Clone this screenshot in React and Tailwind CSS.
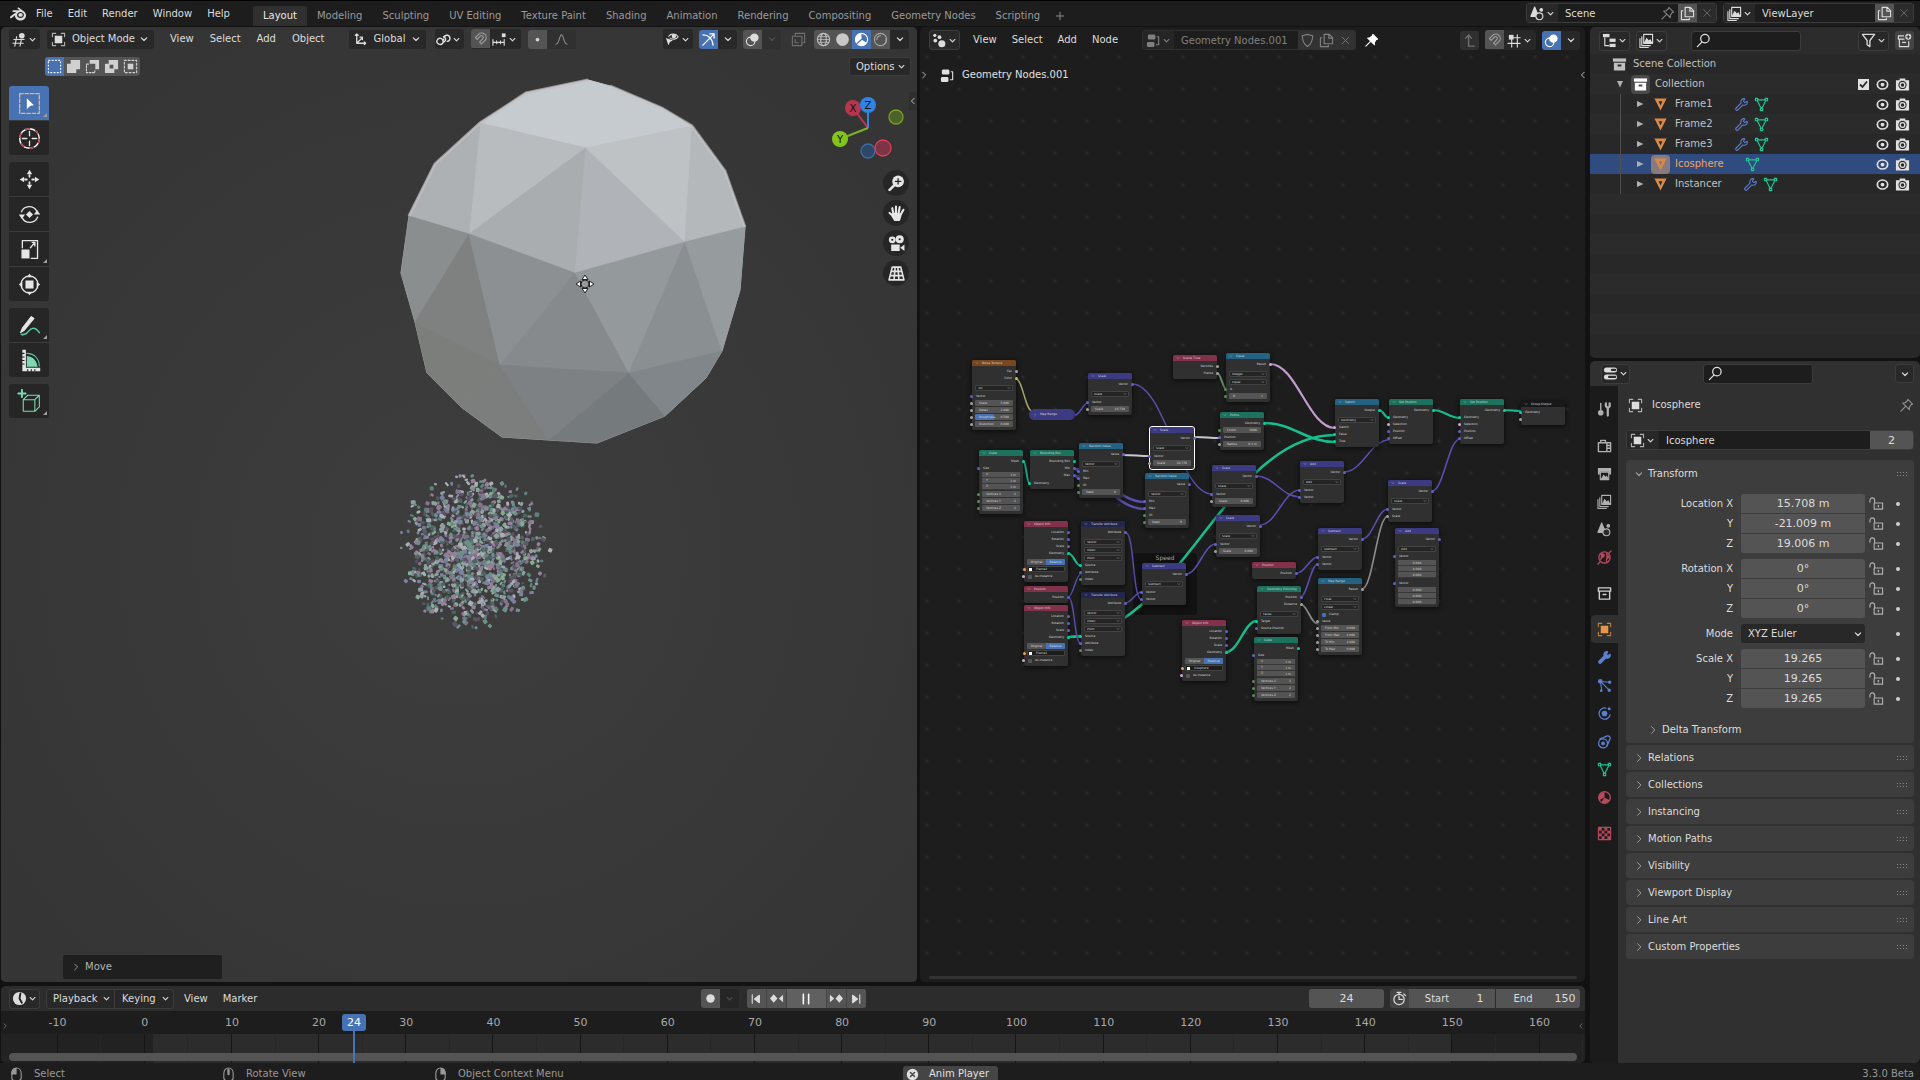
import React from 'react';
import clsx from 'clsx';
import { SiBlender } from 'react-icons/si';

/* ---------- icons ---------- */

const Icon = ({ children, className = 'size-[15px]', box = '0 0 16 16' }) => (
  <svg
    viewBox={box}
    className={clsx('shrink-0', className)}
    fill="none"
    stroke="currentColor"
    strokeWidth="1.2"
    strokeLinecap="round"
    strokeLinejoin="round"
    aria-hidden="true"
  >
    {children}
  </svg>
);

const ICONS = {
  down: <path d="M4.5 6.5 8 10l3.5-3.5" strokeWidth="1.6" />,
  right: <path d="M6 3.5 10.5 8 6 12.5" strokeWidth="1.3" />,
  left: <path d="M10 3.5 5.5 8l4.5 4.5" strokeWidth="1.3" />,
  view3d: (
    <g>
      <path d="M2 8h11M1 12h11M5 5 3 15M10 8 8.5 15" />
      <circle cx="10.5" cy="4" r="3" fill="currentColor" stroke="none" />
    </g>
  ),
  object: (
    <g>
      <path d="M1.5 5V1.5H5M11 1.5h3.5V5M14.5 11v3.5H11M5 14.5H1.5V11" opacity=".75" />
      <rect x="4" y="4" width="8" height="8" fill="currentColor" stroke="none" />
    </g>
  ),
  axes: (
    <g strokeWidth="1.4">
      <path d="M4 2v10h9M4 12l6-6M2.5 3.5 4 2l1.5 1.5M12 10.5l1.5 1.5-1.5 1.5M7.5 5.5H10V8" />
    </g>
  ),
  pivot: (
    <g strokeWidth="1.5">
      <path d="M8.5 5.5a3.3 3.3 0 1 1 3.5 4.500" />
      <path d="M7.500 10.500a3.300 3.300 0 1 0-4.500 2.500 3.300 3.300 0 0 0 4-1l3-3a3.300 3.300 0 0 0-2-4" />
      <circle cx="8" cy="8" r="1" fill="currentColor" stroke="none" />
    </g>
  ),
  magnet: (
    <path d="M2.500 7 6 3.500a4.700 4.700 0 0 1 6.700 6.700L9 13.800l-2-2 3.500-3.600a1.900 1.900 0 0 0-2.700-2.700L4.500 9z" />
  ),
  snapInc: (
    <g>
      <path d="M1 8v6M5 9.500v3M9 9.500v3M13 8v6M1 11h12" />
      <rect x="10.500" y="1.500" width="4" height="4" fill="currentColor" stroke="none" />
    </g>
  ),
  snapGrid: (
    <g>
      <path d="M5 6v9M11 2v13M1 11h13M7 5h7" />
      <rect x="2" y="2" width="5" height="5" fill="currentColor" stroke="none" />
    </g>
  ),
  dot: <circle cx="8" cy="8" r="2" fill="currentColor" stroke="none" />,
  falloff: <path d="M2 13c4 0 3.500-10 6-10s2 10 6 10" />,
  visibility: (
    <g>
      <path d="M4 4.500C6 1.500 12 1.500 14 5 12 8.500 7.500 8 5.500 6.500" />
      <circle cx="9.500" cy="4.500" r="1.700" fill="currentColor" />
      <path d="M1 6.500 8.500 9 5.500 10.500 3.500 14z" fill="currentColor" stroke="none" />
    </g>
  ),
  gizmo: (
    <g strokeWidth="1.400">
      <path d="M2 14 13.500 2.500M9.500 2h4.500v4.500M2 3c6 0 10 4 11 11" />
    </g>
  ),
  overlay: (
    <g>
      <circle cx="10" cy="6" r="4.500" fill="currentColor" stroke="none" />
      <circle cx="6" cy="10" r="4.500" />
    </g>
  ),
  xray: (
    <g>
      <rect x="1.500" y="4.500" width="10" height="10" />
      <path d="M4.500 4V1.500h10v10H12M4.500 8v3.500H8" />
    </g>
  ),
  wire: (
    <g>
      <circle cx="8" cy="8" r="6.500" />
      <ellipse cx="8" cy="8" rx="3" ry="6.500" />
      <path d="M1.500 8h13M2.500 5h11M2.500 11h11" strokeWidth=".8" />
    </g>
  ),
  solid: <circle cx="8" cy="8" r="6.800" fill="currentColor" stroke="none" />,
  material: (
    <g>
      <circle cx="8" cy="8" r="6.500" />
      <path d="M8 1.500V8l5.500 3.500C12 14 9 15 8 14.500 3 14 1.500 11 1.500 8S4 2 8 1.500z" fill="currentColor" stroke="none" />
      <path d="M8 8 3 12.500" stroke="#4772b3" />
    </g>
  ),
  rendered: (
    <g>
      <circle cx="8" cy="8" r="6.500" />
      <path d="M4 8a4 4 0 0 1 4-4M12 13a6 6 0 0 0 2-6" />
    </g>
  ),
  geoNodes: (
    <g fill="currentColor" stroke="none">
      <circle cx="3" cy="2.500" r="1.700" />
      <circle cx="8" cy="4.500" r="2" />
      <circle cx="3.500" cy="8" r="2" />
      <circle cx="10.500" cy="11.500" r="3.800" />
    </g>
  ),
  nodeTree: (
    <g>
      <rect x="2" y="1.500" width="8" height="5.500" rx="1.500" fill="currentColor" stroke="none" />
      <rect x="1" y="9.500" width="8" height="5.500" rx="1.500" fill="currentColor" stroke="none" />
      <path d="M12 4h1.500v8.500H11" />
    </g>
  ),
  shield: <path d="M8 1.500 13.500 3c0 6-1.500 9-5.500 11.500C4 12 2.500 9 2.500 3z" />,
  copy: (
    <g>
      <path d="M5.500 1.500H11l3.500 3.500v6.500h-9zM10.500 1.500v4h4" />
      <path d="M3 5H1.500v9.500h8.500V13" />
    </g>
  ),
  close: <path d="m3.500 3.500 9 9M12.500 3.500l-9 9" />,
  pin: (
    <path d="m9.500 1.500 5 5-1.500.5-2 3v2.500L4 5.500l2.500-.5 2.500-2zM6.500 9.500 2 14" />
  ),
  pinned: (
    <path d="m9.500 1.500 5 5-1.500.5-2 3v2.500L4 5.500l2.500-.5 2.500-2zM6.500 9.500 2 14" fill="currentColor" />
  ),
  parent: <path d="M13 14H7V2M4 5.500 7 2l3 3.500" strokeWidth="1.500" />,
  scene: (
    <g>
      <path d="M5 1 9 11H1z" fill="currentColor" />
      <circle cx="10" cy="11" r="3.700" fill="#2a2a2a" />
      <circle cx="12" cy="4" r="2" fill="currentColor" stroke="none" />
    </g>
  ),
  images: (
    <g>
      <path d="M5 1.500h9.500V11H5zM3 4v9.500h9M1 6v9.500h9" />
      <path d="M5 11l3-6 2.500 3L12 6.500l2.500 4.500z" fill="currentColor" stroke="none" />
    </g>
  ),
  outliner: (
    <g fill="currentColor" stroke="none">
      <rect x="1" y="1" width="7" height="3.500" />
      <rect x="8" y="6" width="6.500" height="3.500" />
      <rect x="8" y="11.500" width="6.500" height="3.500" />
      <path d="M3 5v8.500h4" fill="none" stroke="currentColor" />
    </g>
  ),
  search: (
    <g strokeWidth="1.400">
      <circle cx="9.500" cy="6" r="4.500" />
      <path d="M6.500 9.500 1.500 14.500" />
    </g>
  ),
  filter: <path d="M1.500 1.500h13L9.500 8v6.500l-3-2V8z" strokeWidth="1.400" />,
  newCollection: (
    <g>
      <path d="M1.500 3H7M1.500 3v3.500h6M2.500 6.500v8h10V9M6 10h3" />
      <circle cx="12" cy="4" r="3.200" fill="currentColor" stroke="none" />
      <path d="M12 2.300v3.400M10.300 4h3.400" stroke="#303030" />
    </g>
  ),
  collection: (
    <g fill="currentColor" stroke="none">
      <rect x="1" y="1.500" width="14" height="3.500" />
      <path d="M2 6h12v8.500H2zM6 8v2h4V8z" fillRule="evenodd" />
    </g>
  ),
  collectionLine: (
    <g strokeWidth="1.500">
      <path d="M1.500 2h13v3.500h-13zM2.500 5.500v8.500h11V5.500M6.500 9h3" />
    </g>
  ),
  mesh: <path d="M1.500 1.500h13L8 14.500zM6 4.500 8 9l2-4.500z" fill="currentColor" fillRule="evenodd" stroke="none" />,
  meshData: (
    <g>
      <path d="M4 3h8M3.500 4 7.500 12M12.500 4 8.500 12" />
      <path d="M1.500 1.500h2.500V4H1.500zM12 1.500h2.500V4H12zM6.800 12h2.500v2.500H6.800z" />
    </g>
  ),
  wrench: (
    <path d="M14 4.500 11.500 6 10 4.500 11.500 2C9 1 6.500 3.500 7.500 6.500L2 12c-.8 1 .8 3 2 2l5.500-5.500C12.500 9.500 15 7 14 4.500z" />
  ),
  wrenchFill: (
    <path d="M14 4.500 11.500 6 10 4.500 11.500 2C9 1 6.500 3.500 7.500 6.500L2 12c-.8 1 .8 3 2 2l5.500-5.500C12.500 9.500 15 7 14 4.500z" fill="currentColor" />
  ),
  eye: (
    <g>
      <ellipse cx="8" cy="8" rx="5.500" ry="4.800" strokeWidth="1.800" />
      <circle cx="8" cy="8" r="2" fill="currentColor" stroke="none" />
    </g>
  ),
  camera: (
    <g>
      <path d="M1 3.500h4V1.500h6v2h4v11H1z" fill="currentColor" stroke="none" />
      <circle cx="8" cy="8.500" r="3.800" stroke="#282828" />
      <circle cx="8" cy="8.500" r="1.800" fill="#282828" stroke="none" />
    </g>
  ),
  props: (
    <g>
      <rect x="1" y="1.500" width="14" height="5.500" rx="2.700" fill="currentColor" stroke="none" />
      <rect x="1" y="9" width="14" height="5.500" rx="2.700" fill="currentColor" stroke="none" />
      <path d="M9.500 4.200h3.500M6.500 11.700h6.500" stroke="#2c2c2c" strokeWidth="2.400" />
    </g>
  ),
  tool: (
    <g>
      <path d="M4 1.500V8" strokeWidth="1.500" />
      <circle cx="4" cy="11.500" r="3" fill="currentColor" stroke="none" />
      <path d="M9.500 1.500v3l2 2 2-2v-3M11.500 6.500v8" strokeWidth="2.400" />
    </g>
  ),
  render: (
    <g strokeWidth="1.500">
      <path d="M1.500 5h13v9.500h-13zM4 5V2.500h5V5M10.500 8h4M10.500 11h4M10.500 5v9" />
    </g>
  ),
  output: (
    <g>
      <path d="M1 2h14v7h-2V6H3v3H1z" fill="currentColor" stroke="none" />
      <path d="M3.500 6.500h9v8h-9z" />
      <path d="m4 14 3-5 2 2.500 1.500-1.500 2 4z" fill="currentColor" stroke="none" />
    </g>
  ),
  world: (
    <g strokeWidth="1.400">
      <circle cx="8" cy="8" r="6" />
      <path d="M4 4c3 0 5 1 3 3S4.500 8 4 10M10 3c0 2 2 2.500 3 5-2 0-3 1-3 4" fill="currentColor" />
      <path d="M1 15l2-2M13 3l2-2" />
    </g>
  ),
  particles: (
    <g>
      <circle cx="3.500" cy="3.500" r="2.500" fill="currentColor" stroke="none" />
      <path d="m5 5 7.500 7.500M4 6l1 6.500M6 4l7.500.5" />
      <circle cx="13.500" cy="4.500" r="1.200" fill="currentColor" />
      <circle cx="13" cy="13" r="1.200" fill="currentColor" />
      <circle cx="4.500" cy="13.500" r=".8" fill="currentColor" />
    </g>
  ),
  physics: (
    <g strokeWidth="1.400">
      <path d="M9.500 2.200A6 6 0 1 0 14 9.500" />
      <circle cx="8" cy="8" r="3" fill="currentColor" stroke="none" />
      <circle cx="13" cy="3" r="1.600" fill="currentColor" stroke="none" />
    </g>
  ),
  constraint: (
    <g strokeWidth="1.400">
      <path d="M3 5.500 11 2a2.500 2.500 0 0 1 3 3l-3.500 8" />
      <circle cx="6.500" cy="10" r="4.800" />
      <circle cx="6.500" cy="10" r="2" fill="currentColor" stroke="none" />
    </g>
  ),
  materialTab: (
    <g>
      <circle cx="8" cy="8" r="6.200" strokeWidth="1.400" />
      <path d="M8 2v6l-5.500 3A6.200 6.200 0 0 1 8 2zM8 8l5.500 3a6.200 6.200 0 0 1-9 2z" fill="currentColor" stroke="none" />
    </g>
  ),
  texture: (
    <g>
      <rect x="1.500" y="1.500" width="13" height="13" />
      <path
        d="M2 2h3v3H2zM8 2h3v3H8zM5 5h3v3H5zM11 5h3v3h-3zM2 8h3v3H2zM8 8h3v3H8zM5 11h3v3H5zM11 11h3v3h-3z"
        fill="currentColor"
        stroke="none"
      />
    </g>
  ),
  lock: (
    <g>
      <path d="M1 6.500V4.500a2.500 2.500 0 0 1 5 0v3M5.500 7.500h9V14h-9z" />
      <path d="M10 10v1.500" strokeWidth="1.500" />
    </g>
  ),
  clock: (
    <g>
      <circle cx="8" cy="8" r="7" fill="currentColor" stroke="none" />
      <path d="M9 2.500 8 8l2.500 4.500" stroke="#222" strokeWidth="2" />
    </g>
  ),
  stopwatch: (
    <g strokeWidth="1.300">
      <circle cx="7.500" cy="9" r="5.500" />
      <path d="M5.500 1.500h4M7.500 1.500v2M7.500 5.500V9H11M12.500 3l2 2" />
    </g>
  ),
  record: <circle cx="8" cy="8" r="4.500" fill="currentColor" stroke="none" />,
  jumpStart: <path d="M3 2.500v11M12.500 3 6 8l6.500 5z" fill="currentColor" strokeWidth="1.500" />,
  jumpEnd: <path d="M13 2.500v11M3.500 3 10 8l-6.500 5z" fill="currentColor" strokeWidth="1.500" />,
  prevKey: <path d="M5 3.500 9 8l-4 4.500L1 8zM15 4v8l-4.500-4z" fill="currentColor" stroke="none" />,
  nextKey: <path d="M11 3.500 15 8l-4 4.500L7 8zM1 4v8l4.500-4z" fill="currentColor" stroke="none" />,
  pause: <path d="M5 2.500v11M11 2.500v11" strokeWidth="1.800" />,
  plus: <path d="M8 3v10M3 8h10" />,
  mouseL: (
    <g>
      <path d="M3 7c0-8 10-8 10 0v4.500c0 4.500-10 4.500-10 0z" />
      <path d="M3 7.500c0-3 1-6 4.500-6v6z" fill="currentColor" />
    </g>
  ),
  mouseM: (
    <g>
      <path d="M3 7c0-8 10-8 10 0v4.500c0 4.500-10 4.500-10 0z" />
      <path d="M8 3v4.500" strokeWidth="2.500" />
    </g>
  ),
  mouseR: (
    <g>
      <path d="M3 7c0-8 10-8 10 0v4.500c0 4.500-10 4.500-10 0z" />
      <path d="M13 7.500c0-3-1-6-4.500-6v6z" fill="currentColor" />
    </g>
  ),
  cancel: (
    <g>
      <circle cx="8" cy="8" r="7" fill="currentColor" stroke="none" />
      <path d="m5.500 5.500 5 5M10.500 5.500l-5 5" stroke="#454545" strokeWidth="1.800" />
    </g>
  ),
  // selection modes
  selSet: <rect x="1.500" y="1.500" width="13" height="13" strokeDasharray="2 1.500" strokeLinecap="butt" />,
  selExtend: <path d="M5 1h10v10h-4v4H1V5h4z" fill="currentColor" stroke="none" />,
  selSub: (
    <g>
      <path d="M5 1h10v10h-4V5H5z" fill="currentColor" stroke="none" />
      <path d="M3.500 5.500h-2v9h9v-2" strokeDasharray="2 1.500" />
    </g>
  ),
  selInvert: <path d="M5 1h10v10h-4v4H1V5h4zM6 6v4h4V6z" fill="currentColor" fillRule="evenodd" stroke="none" />,
  selInter: (
    <g>
      <rect x="1.500" y="1.500" width="13" height="13" strokeDasharray="2 2" />
      <rect x="5" y="5" width="6" height="6" fill="currentColor" stroke="none" />
    </g>
  ),
};

const Glyph = ({ name, className }) => <Icon className={className}>{ICONS[name]}</Icon>;

const TOOL_ICONS = {
  select: (
    <g>
      <rect x="3" y="3" width="22" height="22" stroke="#f0b070" strokeDasharray="4 2" strokeWidth="1.500" />
      <path d="m11 8 8 8-4 .5-4 4z" fill="#fff" stroke="none" />
    </g>
  ),
  cursor: (
    <g>
      <circle cx="14" cy="14" r="11" strokeWidth="1.600" stroke="#fff" />
      <circle cx="14" cy="14" r="11" strokeWidth="1.600" stroke="#b43c50" strokeDasharray="5.800 5.800" strokeLinecap="butt" />
      <path d="M14 6v5M14 17v5M6 14h5M17 14h5" strokeWidth="1.500" />
    </g>
  ),
  move: (
    <g strokeWidth="2">
      <path d="M14 9v2M14 17v2M9 14h2M17 14h2" />
      <path d="m14 3-3 5h6zM14 25l-3-5h6zM3 14l5-3v6zM25 14l-5-3v6z" fill="currentColor" stroke="none" />
    </g>
  ),
  rotate: (
    <g strokeWidth="1.500">
      <path d="M5 11a9.500 9.500 0 0 1 17-1M23 17a9.500 9.500 0 0 1-17 1" />
      <path d="m2 14 7 0-3.500 5zM19 14l7 0-3.500-5zM14 10l4 4-4 4-4-4z" fill="currentColor" stroke="none" />
    </g>
  ),
  scale: (
    <g strokeWidth="1.500">
      <path d="M6 12V4h17v20h-7" />
      <rect x="5" y="14" width="9" height="10" fill="currentColor" stroke="none" />
      <path d="m15 12 5-6M17 6h3v4" />
    </g>
  ),
  transform: (
    <g strokeWidth="1.500">
      <circle cx="14" cy="14" r="9.500" />
      <rect x="9.500" y="9.500" width="9" height="9" fill="currentColor" stroke="none" />
      <path d="m14 2-3 4h6zM14 26l-3-4h6zM2 14l4-3v6zM26 14l-4-3v6z" fill="currentColor" stroke="none" />
    </g>
  ),
  annotate: (
    <g>
      <path d="M16 4 6 17l-2 5 4.500-3L19 6z" fill="currentColor" />
      <path d="M5 24c8 2 7-7 13-7 4 0 5 2 7 5" stroke="#58c8a0" strokeWidth="1.800" />
    </g>
  ),
  measure: (
    <g>
      <path d="M11 21V9c8 1 11 6 12 12z" fill="#7fd9b0" stroke="none" />
      <path d="M11 6c9 0 14 7 14 14" stroke="#58c8a0" />
      <path d="M6 2h4v20h16v4H6z" fill="currentColor" stroke="none" />
      <path d="M6 6h2M6 10h2M6 14h2M6 18h2M12 26v-2M16 26v-2M20 26v-2" stroke="#222" />
    </g>
  ),
  addCube: (
    <g stroke="#7fd9b0">
      <path d="M7 12h13v13H7zM7 12l5-5h13v13l-5 5M20 12l5-5" />
      <path d="M5.500 1v8M1.500 5h8" strokeWidth="2.200" />
    </g>
  ),
};

/* ---------- shared controls ---------- */

const MenuButton = ({ children, className }) => (
  <button type="button" className={clsx('whitespace-nowrap', className)}>
    {children}
  </button>
);

// small icon button with a chevron, used by all the editor headers
const IconMenu = ({ icon, label, className }) => (
  <button
    type="button"
    aria-label={label}
    className={clsx('flex h-[20px] items-center justify-center rounded-[3px] border border-[#3c3c3c] bg-[#282828]', className)}
  >
    <Glyph name={icon} />
    <Glyph name="down" className="size-[11px]" />
  </button>
);

const IconButton = ({ icon, label, active, className, iconClass }) => (
  <button
    type="button"
    aria-label={label}
    className={clsx('flex h-[19px] w-[19px] items-center justify-center', active ? 'bg-[#4772b3] text-white' : className)}
  >
    <Glyph name={icon} className={iconClass} />
  </button>
);

const Dropdown = ({ icon, value, label, className }) => (
  <div className={clsx('flex h-[19px] items-center rounded-[3px] bg-[#282828] px-1', className)}>
    {icon && <Glyph name={icon} />}
    <select aria-label={label} className="min-w-0 flex-1 appearance-none bg-transparent pl-[6px] outline-none" defaultValue={value}>
      <option>{value}</option>
    </select>
    <Glyph name="down" className="size-[12px]" />
  </div>
);

/* ---------- top bar ---------- */

const WORKSPACES = [
  'Layout',
  'Modeling',
  'Sculpting',
  'UV Editing',
  'Texture Paint',
  'Shading',
  'Animation',
  'Rendering',
  'Compositing',
  'Geometry Nodes',
  'Scripting',
];

const DataBlock = ({ icon, name, pin }) => (
  <div className="flex h-[20px] w-[191px] items-stretch rounded-[3px] border border-[#3c3c3c] bg-[#1d1d1d]">
    <button type="button" aria-label={`Browse ${name}`} className="flex w-[31px] items-center justify-center bg-[#282828]">
      <Glyph name={icon} />
      <Glyph name="down" className="size-[11px]" />
    </button>
    <input aria-label={name} defaultValue={name} className="min-w-0 flex-1 bg-transparent pl-[7px] outline-none" />
    {pin && (
      <button type="button" aria-label="Pin" className="flex w-[22px] items-center justify-center text-[#808080]">
        <Glyph name="pin" />
      </button>
    )}
    <button type="button" aria-label="New" className="flex w-[19px] items-center justify-center bg-[#545454]">
      <Glyph name="copy" />
    </button>
    <button type="button" aria-label="Remove" className="flex w-[19px] items-center justify-center bg-[#2b2b2b] text-[#6a6a6a]">
      <Glyph name="close" className="size-[12px]" />
    </button>
  </div>
);

const TopBar = () => (
  <header className="flex h-[26px] shrink-0 items-start border-t border-black bg-[#1d1d1d]">
    <nav className="flex h-[25px] items-center gap-[15px] pl-[10px]">
      <SiBlender className="size-[16px] -mr-[5px]" />
      {['File', 'Edit', 'Render', 'Window', 'Help'].map((m) => (
        <MenuButton key={m}>{m}</MenuButton>
      ))}
    </nav>
    <nav className="ml-[23px] mt-[5px] flex h-[20px] items-stretch">
      {WORKSPACES.map((w, i) => (
        <button
          key={w}
          type="button"
          className={clsx('whitespace-nowrap rounded-t-[3px] px-[10px]', i === 0 ? 'bg-[#303030] text-[#e6e6e6]' : 'text-[#9a9a9a]')}
        >
          {w}
        </button>
      ))}
      <button type="button" aria-label="Add workspace" className="flex w-[20px] items-center justify-center text-[#9a9a9a]">
        <Glyph name="plus" className="size-[12px]" />
      </button>
    </nav>
    <div className="ml-auto mt-[2px] flex gap-[6px] pr-[6px]">
      <DataBlock icon="scene" name="Scene" pin />
      <DataBlock icon="images" name="ViewLayer" />
    </div>
  </header>
);

/* ---------- 3D viewport ---------- */

const OUTLINE =
  '588,80 526,93 480,123 435,164 409,216 401,273 415,322 427,373 461,407 502,437 549,440 597,443 665,416 706,378 722,351 740,290 745,227 725,171 692,126 662,108 610,86';

const FACES = [
  ['480,123 526,93 588,80 610,86 662,108 692,126 586,148', '#c6cbcf'],
  ['480,123 586,148 469,234', '#b8bcbf'],
  ['480,123 469,234 409,216 435,164', '#adb1b4'],
  ['586,148 469,234 575,273', '#a9adb0'],
  ['586,148 575,273 685,242', '#b0b4b8'],
  ['586,148 692,126 685,242', '#bec2c5'],
  ['692,126 725,171 745,227 685,242', '#b4b8bb'],
  ['409,216 469,234 415,322 401,273', '#8b8e8e'],
  ['469,234 415,322 500,365', '#7e8180'],
  ['469,234 575,273 500,365', '#8c9092'],
  ['575,273 500,365 629,373', '#868a8d'],
  ['575,273 685,242 629,373', '#94999c'],
  ['685,242 629,373 722,351', '#8a8f92'],
  ['685,242 745,227 740,290 722,351', '#969b9e'],
  ['415,322 500,365 461,407 427,373', '#7b7e7b'],
  ['500,365 461,407 502,437 549,440', '#7b7e7d'],
  ['500,365 629,373 549,440', '#7d8183'],
  ['629,373 549,440 597,443 665,416', '#757a7c'],
  ['629,373 665,416 706,378 722,351', '#81868a'],
];

const CONFETTI = ['#8fa0a2', '#6d918a', '#86748f', '#98809a', '#5f807d', '#7a82a0', '#86ab92', '#565f60', '#5f5266', '#a9aeb3', '#4d6663'];

const makeParticles = (count) => {
  let seed = 24;
  const rnd = () => {
    seed = (seed * 1664525 + 1013904223) % 4294967296;
    return seed / 4294967296;
  };
  return Array.from({ length: count }, () => {
    const a = rnd() * Math.PI * 2;
    const r = 82 * Math.pow(rnd(), 0.7) * (0.7 + rnd() * 0.3);
    return {
      x: 473 + Math.cos(a) * r * 0.94,
      y: 549 + Math.sin(a) * r,
      w: 2 + rnd() * 3,
      h: 2 + rnd() * 3,
      turn: rnd() * 90,
      fill: CONFETTI[Math.floor(rnd() * CONFETTI.length)],
    };
  });
};

const PARTICLES = makeParticles(1350);

const SceneDrawing = () => (
  <svg viewBox="1 27 916 955" preserveAspectRatio="xMidYMid slice" className="absolute inset-0 h-full w-full">
    <defs>
      <radialGradient id="backdrop" cx="50%" cy="55%" r="60%">
        <stop offset="0" stopColor="#3e3e3e" />
        <stop offset="1" stopColor="#353535" />
      </radialGradient>
    </defs>
    <rect x="1" y="27" width="916" height="955" fill="url(#backdrop)" />
    <polygon points={OUTLINE} fill="#a8a9aa" stroke="#a8a9aa" strokeWidth="1" />
    {FACES.map(([points, fill]) => (
      <polygon key={points} points={points} fill={fill} stroke={fill} strokeWidth=".6" />
    ))}
    <polyline points="409,216 435,164 480,123 526,93 588,80" fill="none" stroke="#c4c0c4" strokeWidth="3" opacity=".7" />
    <polyline points="610,86 662,108 692,126 725,171 745,227" fill="none" stroke="#c4c4c6" strokeWidth="3" opacity=".6" />
    {PARTICLES.map((p, i) => (
      <rect key={i} x={p.x} y={p.y} width={p.w} height={p.h} rx="1" fill={p.fill} transform={`rotate(${p.turn} ${p.x} ${p.y})`} />
    ))}
    <g transform="translate(585 284)" fill="#fff" stroke="#222" strokeWidth="1">
      <circle r="4" fill="none" />
      <path d="M0-9 3-4.500h-6zM0 9 3 4.500h-6zM-9 0l4.500-3v6zM9 0 4.500-3v6z" />
    </g>
  </svg>
);

const AxisGizmo = () => (
  <svg viewBox="825 92 84 70" className="h-[70px] w-[84px]">
    <circle cx="868" cy="151" r="7" fill="#2f4766" stroke="#3b6ca6" strokeWidth="1.300" />
    <circle cx="896" cy="117" r="7" fill="#4d622a" stroke="#76a120" strokeWidth="1.300" />
    <circle cx="883" cy="148" r="8" fill="#7a3546" stroke="#e83a58" strokeWidth="1.300" />
    <path d="M868 128 853 108" stroke="#b83a50" strokeWidth="2" />
    <circle cx="853" cy="108" r="8" fill="#b5364e" />
    <path d="M868 128v-23" stroke="#2f83e3" strokeWidth="2" />
    <path d="m868 128-28 11" stroke="#7db320" strokeWidth="2" />
    <circle cx="868" cy="105" r="8" fill="#2f83e3" />
    <circle cx="840" cy="139" r="8" fill="#85c41c" />
    <g fontSize="10" textAnchor="middle" fill="#111">
      <text x="853" y="112">X</text>
      <text x="868" y="109">Z</text>
      <text x="840" y="143">Y</text>
    </g>
  </svg>
);

const NAV_ICONS = [
  [
    'Zoom',
    <g>
      <circle cx="9.500" cy="6" r="5.500" fill="currentColor" stroke="none" />
      <path d="M6 9.500 1.500 14" strokeWidth="2.500" />
      <path d="M9.500 3.500v5M7 6h5" stroke="#222" />
    </g>,
  ],
  [
    'Pan',
    <path
      d="M4.500 10 1.500 7.500M5 8 4 3M7.500 7V1.500M10 7.500 11 2M12 9l2.500-4.500M5 8l7 1-1.500 5h-4L4 10z"
      fill="currentColor"
      strokeWidth="2"
    />,
  ],
  [
    'Camera view',
    <g fill="currentColor" stroke="none">
      <circle cx="4" cy="4.500" r="3.200" />
      <circle cx="11" cy="4" r="3.800" />
      <path d="M3 9h8v6H3zM11.500 12 15.500 9v6z" />
      <circle cx="4" cy="4.500" r="1" fill="#222" />
      <circle cx="11" cy="4" r="1" fill="#222" />
    </g>,
  ],
  ['Orthographic', <path d="M4 2h8l3 12H1zM3 6h10M2 10h12M6.700 2 5.700 14M9.300 2l1 12" strokeWidth="1.500" />],
];

const TOOL_GROUPS = [['select', 'cursor'], ['move', 'rotate', 'scale', 'transform'], ['annotate', 'measure'], ['addCube']];
const WITH_CORNER = ['select', 'scale', 'annotate', 'addCube'];

const Toolbar = () => (
  <div className="flex w-[40px] flex-col gap-[7px]">
    {TOOL_GROUPS.map((group) => (
      <div key={group[0]} className="flex flex-col gap-px overflow-hidden rounded-[3px] bg-[#3c3c3c]">
        {group.map((tool) => (
          <button
            key={tool}
            type="button"
            aria-label={tool}
            className={clsx(
              'relative flex h-[34px] items-center justify-center text-[#e6e6e6]',
              tool === 'select' ? 'bg-[#4772b3]' : 'bg-[#262626]'
            )}
          >
            <Icon box="0 0 28 28" className="size-[25px]">
              {TOOL_ICONS[tool]}
            </Icon>
            {WITH_CORNER.includes(tool) && (
              <svg viewBox="0 0 4 4" className="absolute bottom-[3px] right-[2px] size-[4px]">
                <path d="M4 0v4H0z" fill="#a0a0a0" />
              </svg>
            )}
          </button>
        ))}
      </div>
    ))}
  </div>
);

const ViewportHeader = () => (
  <div className="flex h-[22px] items-center pl-[8px] pr-[8px]">
    <IconMenu icon="view3d" label="Editor type" className="w-[31px] border-transparent" />
    <Dropdown icon="object" value="Object Mode" label="Mode" className="ml-[7px] w-[107px]" />
    <nav className="ml-[16px] flex gap-[16px]">
      {['View', 'Select', 'Add', 'Object'].map((m) => (
        <MenuButton key={m}>{m}</MenuButton>
      ))}
    </nav>
    <Dropdown icon="axes" value="Global" label="Orientation" className="ml-[24px] w-[77px]" />
    <IconMenu icon="pivot" label="Pivot point" className="ml-[9px] w-[29px] border-transparent" />
    <div className="ml-[7px] flex overflow-hidden rounded-[3px] bg-[#282828]">
      <IconButton icon="magnet" label="Snap" className="bg-[#545454] text-[#a0a0a0]" />
      <IconMenu icon="snapInc" label="Snap to" className="h-[19px] w-[31px] border-0" />
    </div>
    <div className="ml-[7px] flex overflow-hidden rounded-[3px] bg-[#303030] text-[#8a8a8a]">
      <IconButton icon="dot" label="Proportional editing" className="bg-[#545454] text-[#d0d0d0]" />
      <IconButton icon="falloff" label="Falloff" className="w-[29px]" />
    </div>

    <IconMenu icon="visibility" label="Visibility" className="ml-auto w-[30px] border-transparent" />
    <div className="ml-[6px] flex overflow-hidden rounded-[3px] bg-[#282828]">
      <IconButton icon="gizmo" label="Gizmos" active />
      <IconButton icon="down" label="Gizmo options" iconClass="size-[12px]" />
    </div>
    <div className="ml-[6px] flex overflow-hidden rounded-[3px] bg-[#303030]">
      <IconButton icon="overlay" label="Overlays" className="bg-[#545454]" />
      <IconButton icon="down" label="Overlay options" className="text-[#505050]" iconClass="size-[12px]" />
    </div>
    <IconButton icon="xray" label="X-ray" className="ml-[8px] mr-[6px] text-[#707070]" />
    <div className="flex overflow-hidden rounded-[3px] bg-[#282828]">
      <IconButton icon="wire" label="Wireframe" className="bg-[#545454] text-[#c0c0c0]" />
      <IconButton icon="solid" label="Solid" className="bg-[#545454] text-[#c8c8c8]" />
      <IconButton icon="material" label="Material preview" active />
      <IconButton icon="rendered" label="Rendered" className="bg-[#545454] text-[#a8a8a8]" />
      <IconButton icon="down" label="Shading options" iconClass="size-[12px]" />
    </div>
  </div>
);

const Viewport = () => (
  <section className="relative flex min-w-0 flex-[916] flex-col overflow-hidden rounded-[5px] bg-[#393939]">
    <SceneDrawing />
    <div className="relative flex flex-1 flex-col pt-px">
      <ViewportHeader />
      <div className="mt-[7px] flex h-[19px] items-stretch justify-between pl-[44px] pr-[6px]">
        <div className="flex overflow-hidden rounded-[3px] text-[#d0d0d0]">
          {['selSet', 'selExtend', 'selSub', 'selInvert', 'selInter'].map((s, i) => (
            <IconButton key={s} icon={s} label={s} active={i === 0} className="bg-[#545454]" />
          ))}
        </div>
        <button type="button" className="flex w-[62px] items-center justify-between rounded-[3px] border border-[#3c3c3c] bg-[#282828] pl-[6px] pr-[3px]">
          Options
          <Glyph name="down" className="size-[11px]" />
        </button>
      </div>
      <div className="flex flex-1 items-start justify-between pl-[8px] pt-[10px]">
        <Toolbar />
        <div className="flex items-start pt-[6px]">
          <div className="flex flex-col items-end">
            <AxisGizmo />
            <div className="mt-[8px] flex flex-col gap-[4px]">
              {NAV_ICONS.map(([label, art]) => (
                <button key={label} type="button" aria-label={label} className="flex size-[26px] items-center justify-center rounded-full bg-[#262626] text-[#e6e6e6]">
                  <Icon className="size-[17px]">{art}</Icon>
                </button>
              ))}
            </div>
          </div>
          <button type="button" aria-label="Show sidebar" className="flex h-[18px] w-[8px] items-center justify-center bg-[#2a2a2a]/60">
            <Glyph name="left" className="size-[10px]" />
          </button>
        </div>
      </div>
      <button type="button" className="mb-[3px] ml-[62px] flex h-[24px] w-[159px] items-center gap-[4px] rounded-[2px] bg-[#1f1f1f] pl-[8px] text-[#b4b4b4]">
        <Glyph name="right" className="size-[10px]" />
        Move
      </button>
    </div>
  </section>
);

/* ---------- node editor ---------- */

// canvas pan, in pixels
const PAN = { x: 920, y: 27 };

const SOCKET = {
  v: 'bg-[#6363c7]',
  g: 'bg-[#00d6a3]',
  f: 'bg-[#a1a1a1]',
  i: 'bg-[#598c5c]',
  c: 'bg-[#c7c729]',
  o: 'bg-[#ed9e5c]',
  b: 'bg-[#cca6d6]',
};

const HEAD = {
  vector: 'bg-[#3c3a83]',
  geometry: 'bg-[#1d725e]',
  convert: 'bg-[#246283]',
  input: 'bg-[#83314a]',
  texture: 'bg-[#79461d]',
  attribute: 'bg-[#22254e]',
  group: 'bg-[#181818]',
};

const scaleRows = (value) => [
  ['out', 'Vector', 'v'],
  ['gap'],
  ['sel', 'Scale'],
  ['thin'],
  ['in', 'Vector', 'v'],
  ['num', 'Scale', value, 'f'],
];

const mathRows = (op) => [['out', 'Vector', 'v'], ['gap'], ['sel', op], ['thin'], ['in', 'Vector', 'v'], ['in', 'Vector', 'v']];

const randomRows = [
  ['out', 'Value', 'v'],
  ['gap'],
  ['sel', 'Vector'],
  ['in', 'Min', 'v'],
  ['in', 'Max', 'v'],
  ['in', 'ID', 'i'],
  ['num', 'Seed', '0', 'i'],
];

const cubeRows = [
  ['out', 'Mesh', 'g'],
  ['in', 'Size', 'v'],
  ['vec', 'X', '1 m'],
  ['vec', 'Y', '1 m'],
  ['vec', 'Z', '1 m'],
  ['thin'],
  ['num', 'Vertices X', '2', 'i'],
  ['num', 'Vertices Y', '2', 'i'],
  ['num', 'Vertices Z', '2', 'i'],
];

const objectRows = (name) => [
  ['out', 'Location', 'v'],
  ['out', 'Rotation', 'v'],
  ['out', 'Scale', 'v'],
  ['out', 'Geometry', 'g'],
  ['gap'],
  ['toggle', 'Original', 'Relative'],
  ['obj', name],
  ['check', 'As Instance'],
];

const transferRows = [
  ['out', 'Attribute', 'v'],
  ['gap'],
  ['sel', 'Vector'],
  ['sel', 'Index'],
  ['sel', 'Point'],
  ['in', 'Source', 'g'],
  ['in', 'Attribute', 'v'],
  ['in', 'Index', 'i'],
];

const setPositionRows = [
  ['out', 'Geometry', 'g'],
  ['in', 'Geometry', 'g'],
  ['in', 'Selection', 'b'],
  ['in', 'Position', 'v'],
  ['in', 'Offset', 'v'],
];

const NODES = [
  { x: 972, y: 360, title: 'Noise Texture', kind: 'texture', rows: [
    ['out', 'Fac', 'f'], ['out', 'Color', 'c'], ['gap'], ['sel', '3D'], ['thin'], ['in', 'Vector', 'v'],
    ['num', 'Scale', '5.000', 'f'], ['num', 'Detail', '2.000', 'f'], ['slide', 'Roughness', '0.500', 'f'], ['num', 'Distortion', '0.000', 'f'],
  ] },
  { x: 1088, y: 373, title: 'Scale', kind: 'vector', rows: scaleRows('10.730') },
  { x: 1150, y: 427, title: 'Scale', kind: 'vector', selected: true, rows: scaleRows('30.770') },
  { x: 979, y: 450, title: 'Cube', kind: 'geometry', rows: cubeRows },
  { x: 1030, y: 450, title: 'Bounding Box', kind: 'geometry', rows: [
    ['out', 'Bounding Box', 'g'], ['out', 'Min', 'v'], ['out', 'Max', 'v'], ['thin'], ['in', 'Geometry', 'g'],
  ] },
  { x: 1079, y: 443, title: 'Random Value', kind: 'convert', rows: randomRows },
  { x: 1145, y: 473, title: 'Random Value', kind: 'convert', rows: randomRows },
  { x: 1220, y: 412, title: 'Points', kind: 'geometry', rows: [
    ['out', 'Geometry', 'g'], ['num', 'Count', '3000', 'i'], ['in', 'Position', 'v'], ['num', 'Radius', '0.1 m', 'f'],
  ] },
  { x: 1212, y: 465, title: 'Scale', kind: 'vector', rows: scaleRows('0.400') },
  { x: 1216, y: 515, title: 'Scale', kind: 'vector', rows: scaleRows('0.000') },
  { x: 1173, y: 355, title: 'Scene Time', kind: 'input', rows: [['out', 'Seconds', 'f'], ['out', 'Frame', 'f']] },
  { x: 1226, y: 353, title: 'Equal', kind: 'convert', rows: [
    ['out', 'Result', 'b'], ['gap'], ['sel', 'Integer'], ['sel', 'Equal'], ['in', 'A', 'i'], ['num', 'B', '1', 'i'],
  ] },
  { x: 1335, y: 399, title: 'Switch', kind: 'convert', rows: [
    ['out', 'Output', 'g'], ['gap'], ['sel', 'Geometry'], ['in', 'Switch', 'b'], ['in', 'False', 'g'], ['in', 'True', 'g'],
  ] },
  { x: 1389, y: 399, title: 'Set Position', kind: 'geometry', rows: setPositionRows },
  { x: 1460, y: 399, title: 'Set Position', kind: 'geometry', rows: setPositionRows },
  { x: 1521, y: 401, title: 'Group Output', kind: 'group', rows: [['in', 'Geometry', 'g'], ['in', '', 'f']] },
  { x: 1300, y: 461, title: 'Add', kind: 'vector', rows: mathRows('Add') },
  { x: 1388, y: 480, title: 'Scale', kind: 'vector', rows: [...mathRows('Scale').slice(0, 5), ['in', 'Scale', 'f']] },
  { x: 1318, y: 528, title: 'Subtract', kind: 'vector', rows: mathRows('Subtract') },
  { x: 1395, y: 528, title: 'Add', kind: 'vector', rows: [
    ['out', 'Vector', 'v'], ['gap'], ['sel', 'Add'], ['in', 'Vector', 'v'], ['vec', '', '0.000'], ['vec', '', '0.000'], ['vec', '', '0.000'],
    ['gap'], ['in', 'Vector', 'v'], ['vec', '', '0.000'], ['vec', '', '0.000'], ['vec', '', '0.000'],
  ] },
  { x: 1252, y: 562, title: 'Position', kind: 'input', rows: [['out', 'Position', 'v']] },
  { x: 1257, y: 586, title: 'Geometry Proximity', kind: 'geometry', rows: [
    ['out', 'Position', 'v'], ['out', 'Distance', 'f'], ['gap'], ['sel', 'Faces'], ['in', 'Target', 'g'], ['in', 'Source Position', 'v'],
  ] },
  { x: 1318, y: 578, title: 'Map Range', kind: 'convert', rows: [
    ['out', 'Result', 'f'], ['gap'], ['sel', 'Float'], ['sel', 'Linear'], ['check', 'Clamp', true], ['in', 'Value', 'f'],
    ['num', 'From Min', '0.000', 'f'], ['num', 'From Max', '2.000', 'f'], ['num', 'To Min', '4.000', 'f'], ['num', 'To Max', '0.000', 'f'],
  ] },
  { x: 1182, y: 620, title: 'Object Info', kind: 'input', rows: objectRows('Icosphere') },
  { x: 1254, y: 637, title: 'Cube', kind: 'geometry', rows: cubeRows },
  { x: 1024, y: 521, title: 'Object Info', kind: 'input', rows: objectRows('Frame2') },
  { x: 1024, y: 586, title: 'Position', kind: 'input', rows: [['out', 'Position', 'v']] },
  { x: 1024, y: 605, title: 'Object Info', kind: 'input', rows: objectRows('Frame1') },
  { x: 1081, y: 521, title: 'Transfer Attribute', kind: 'attribute', rows: transferRows },
  { x: 1081, y: 592, title: 'Transfer Attribute', kind: 'attribute', rows: transferRows },
  { x: 1142, y: 563, title: 'Subtract', kind: 'vector', rows: mathRows('Subtract') },
];

// [x1, y1, x2, y2, colour, width]
const PURPLE = '#5a4fae';
const GREEN = '#19bd8d';
const LINKS = [
  [1016, 379, 1032, 411, '#a8a86a', 1.4],
  [1075, 415, 1088, 403, PURPLE, 1.4],
  [1132, 384, 1212, 494, PURPLE, 1.4],
  [1195, 437, 1220, 438, '#c8c8d0', 2],
  [1123, 455, 1150, 456, '#c8c8d0', 2],
  [1023, 461, 1030, 484, GREEN, 2],
  [1075, 469, 1080, 473, PURPLE, 2],
  [1075, 476, 1080, 480, PURPLE, 2],
  [1075, 469, 1145, 502, PURPLE, 2.4],
  [1075, 476, 1145, 509, PURPLE, 2.4],
  [1264, 423, 1335, 442, GREEN, 2.6],
  [1068, 637, 1335, 435, GREEN, 2.6],
  [1068, 553, 1081, 566, GREEN, 2.2],
  [1068, 637, 1081, 636, GREEN, 2.2],
  [1068, 597, 1081, 574, PURPLE, 1.4],
  [1068, 597, 1081, 644, PURPLE, 1.4],
  [1125, 532, 1142, 600, PURPLE, 1.4],
  [1125, 603, 1142, 592, PURPLE, 1.4],
  [1186, 574, 1216, 544, PURPLE, 1.6],
  [1260, 525, 1300, 490, PURPLE, 1.6],
  [1256, 476, 1300, 497, PURPLE, 1.6],
  [1344, 472, 1389, 440, PURPLE, 1.6],
  [1379, 410, 1389, 418, GREEN, 2.2],
  [1433, 410, 1460, 418, GREEN, 2.2],
  [1504, 410, 1521, 411, GREEN, 2.2],
  [1432, 491, 1460, 439, PURPLE, 1.6],
  [1217, 373, 1227, 390, '#6f8f72', 2],
  [1270, 364, 1335, 428, '#c39ccd', 2.2],
  [1362, 539, 1388, 509, PURPLE, 1.6],
  [1362, 589, 1388, 516, '#8c8c8c', 1.6],
  [1297, 573, 1318, 557, PURPLE, 1.6],
  [1300, 597, 1318, 564, PURPLE, 1.6],
  [1300, 604, 1318, 624, '#8c8c8c', 1.6],
  [1226, 652, 1257, 621, GREEN, 2.4],
];

const linkPath = ([x1, y1, x2, y2]) => {
  const h = Math.max(0.41 * (x2 - x1), 0.15 * Math.abs(y2 - y1));
  return `M${x1} ${y1}C${x1 + h} ${y1} ${x2 - h} ${y2} ${x2} ${y2}`;
};

const Socket = ({ side, type }) => (
  <span className={clsx('absolute top-[2px] size-[3px] rounded-full', side === 'out' ? '-right-[2px]' : '-left-[2px]', SOCKET[type])} />
);

const NodeRow = ({ row }) => {
  const [type, a, b, c] = row;
  switch (type) {
    case 'gap':
      return <div className="h-[2px]" />;
    case 'thin':
      return <div className="h-px" />;
    case 'out':
      return (
        <div className="relative h-[7px] px-[4px] text-right leading-[7px]">
          {a}
          <Socket side="out" type={b} />
        </div>
      );
    case 'in':
      return (
        <div className="relative h-[7px] px-[4px] leading-[7px]">
          {a}
          <Socket side="in" type={b} />
        </div>
      );
    case 'sel':
      return (
        <div className="mx-[3px] flex h-[8px] items-center py-px">
          <div className="flex h-[6px] w-full items-center rounded-[1px] border border-[#424242] bg-[#242424] pr-px">
            <select aria-label={a} defaultValue={a} className="h-[4px] min-w-0 flex-1 appearance-none bg-transparent pl-[2px] leading-none">
              <option>{a}</option>
            </select>
            <Glyph name="down" className="size-[4px]" />
          </div>
        </div>
      );
    case 'vec':
      return (
        <label className="mx-[3px] flex h-[6px] items-center justify-between border-b border-[#383838] bg-[#545454] px-[4px]">
          {a && <span>{a}</span>}
          <input defaultValue={b} aria-label={a || 'value'} className={clsx('h-[5px] min-w-0 bg-transparent leading-none', a ? 'w-[14px] text-right' : 'w-full text-center')} />
        </label>
      );
    case 'num':
    case 'slide':
      return (
        <label
          className={clsx(
            'relative mx-[3px] mb-px flex h-[6px] items-center justify-between rounded-[1px] px-[4px]',
            type === 'slide' ? 'bg-linear-to-r from-[#4772b3] from-50% to-[#545454] to-50%' : 'bg-[#545454]'
          )}
        >
          <span>{a}</span>
          <input defaultValue={b} className="h-[5px] w-[14px] min-w-0 bg-transparent text-right leading-none" />
          <span className={clsx('absolute -left-[5px] size-[3px] rounded-full', SOCKET[c])} />
        </label>
      );
    case 'toggle':
      return (
        <div className="mx-[3px] mb-px flex h-[6px] overflow-hidden rounded-[1px]">
          <button type="button" className="flex-1 bg-[#545454]">{a}</button>
          <button type="button" className="flex-1 bg-[#4772b3]">{b}</button>
        </div>
      );
    case 'obj':
      return (
        <div className="relative mx-[3px] my-px flex h-[6px] items-center gap-[4px] rounded-[1px] border border-[#424242] bg-[#1d1d1d] px-px">
          <span className="size-[3px] bg-white" />
          {a}
          <span className="absolute -left-[5px] size-[3px] rounded-full bg-[#ed9e5c]" />
        </div>
      );
    case 'check':
      return (
        <label className="relative mx-[4px] flex h-[7px] items-center gap-[3px]">
          <input type="checkbox" defaultChecked={b} className={clsx('size-[4px] appearance-none rounded-[1px]', b ? 'bg-[#4772b3]' : 'bg-[#545454]')} />
          {a}
          {!b && <span className="absolute -left-[6px] size-[3px] rounded-full bg-[#cca6d6]" />}
        </label>
      );
    default:
      return null;
  }
};

const Node = ({ node }) => (
  <article
    className={clsx(
      'absolute w-[44px] rounded-[2px] bg-[#303030] pb-[2px] text-[3px] leading-none text-[#d8d8d8] shadow-[0_1px_4px_1px_rgba(0,0,0,0.5)]',
      node.selected && 'outline-1 outline-white'
    )}
    style={{ left: node.x - PAN.x, top: node.y - PAN.y }}
  >
    <h3 className={clsx('mb-[2px] flex h-[6px] items-center gap-[3px] rounded-t-[2px] pl-[3px]', HEAD[node.kind])}>
      <Glyph name="down" className="size-[4px]" />
      {node.title}
    </h3>
    {node.rows.map((row, i) => (
      <NodeRow key={i} row={row} />
    ))}
  </article>
);

const NodeHeader = () => (
  <div className="flex h-[26px] items-center pl-[9px] pr-[5px]">
    <IconMenu icon="geoNodes" label="Editor type" className="w-[31px]" />
    <nav className="ml-[13px] flex gap-[15px]">
      {['View', 'Select', 'Add', 'Node'].map((m) => (
        <MenuButton key={m}>{m}</MenuButton>
      ))}
    </nav>
    <div className="ml-[24px] flex h-[20px] w-[214px] items-stretch rounded-[3px] border border-[#303030] text-[#808080]">
      <button type="button" aria-label="Browse node tree" className="flex w-[31px] items-center justify-center bg-[#252525]">
        <Glyph name="nodeTree" />
        <Glyph name="down" className="size-[11px]" />
      </button>
      <input aria-label="Node tree" defaultValue="Geometry Nodes.001" className="min-w-0 flex-1 bg-transparent pl-[7px] outline-none" />
      <IconButton icon="shield" label="Fake user" className="h-full bg-[#323232]" />
      <IconButton icon="copy" label="New node tree" className="h-full bg-[#323232]" />
      <IconButton icon="close" label="Unlink" className="h-full bg-[#323232]" iconClass="size-[11px]" />
    </div>
    <IconButton icon="pinned" label="Pin" className="ml-[6px] text-white" />
    <IconButton icon="parent" label="Parent node tree" className="ml-auto rounded-[3px] bg-[#303030] text-[#707070]" />
    <div className="ml-[6px] flex overflow-hidden rounded-[3px] bg-[#282828]">
      <IconButton icon="magnet" label="Snap" className="bg-[#545454] text-[#a0a0a0]" />
      <IconMenu icon="snapGrid" label="Snap to" className="h-[19px] w-[32px] border-0" />
    </div>
    <div className="ml-[6px] flex overflow-hidden rounded-[3px] bg-[#282828]">
      <IconButton icon="overlay" label="Overlays" active />
      <IconButton icon="down" label="Overlay options" iconClass="size-[12px]" />
    </div>
  </div>
);

const NodeEditor = () => (
  <section className="relative flex min-w-0 flex-[665] flex-col overflow-hidden rounded-[5px] bg-[#1d1d1d]">
    <div className="absolute inset-0 top-[26px] bg-[radial-gradient(circle,#2b2b2b_1px,transparent_2px)] bg-[length:32px_32px] bg-[position:-9px_-12px]" />
    <div className="absolute inset-0 overflow-hidden">
      <div
        className="absolute h-[62px] w-[64px] rounded-[4px] bg-[#121212]"
        style={{ left: 1133 - PAN.x, top: 553 - PAN.y }}
      >
        <p className="pt-px text-center text-[6px] leading-[8px] text-[#a8a8a8]">Speed</p>
      </div>
      <svg className="absolute inset-0 h-full w-full" fill="none">
        <g transform={`translate(${-PAN.x} ${-PAN.y})`}>
          {LINKS.map((link, i) => (
            <path key={i} d={linkPath(link)} stroke={link[4]} strokeWidth={link[5]} />
          ))}
        </g>
      </svg>
      <div
        className="absolute flex h-[11px] w-[46px] items-center gap-[3px] rounded-full bg-[#3c3a83] pl-[4px] text-[3px] leading-none"
        style={{ left: 1029 - PAN.x, top: 409 - PAN.y }}
      >
        <Glyph name="right" className="size-[4px]" />
        Map Range
      </div>
      {NODES.map((node) => (
        <Node key={`${node.x}-${node.y}`} node={node} />
      ))}
    </div>
    <div className="relative flex flex-1 flex-col">
      <NodeHeader />
      <div className="flex items-start pt-[12px]">
        <button type="button" aria-label="Show toolbar" className="flex h-[20px] w-[8px] items-center justify-center">
          <Glyph name="right" className="size-[10px]" />
        </button>
        <p className="ml-[12px] flex h-[20px] items-center gap-[7px] text-[#e0e0e0]">
          <Glyph name="nodeTree" />
          Geometry Nodes.001
        </p>
        <button type="button" aria-label="Show sidebar" className="ml-auto flex h-[20px] w-[4px] items-center justify-center">
          <Glyph name="left" className="size-[10px]" />
        </button>
      </div>
      <div className="mb-[3px] ml-[9px] mr-[8px] mt-auto h-[3px] rounded-full bg-[#333333]" />
    </div>
  </section>
);

/* ---------- timeline ---------- */

const TICKS = Array.from({ length: 18 }, (_, i) => i * 10 - 10);

const FrameField = ({ label, value, className }) => (
  <label className={clsx('flex h-[19px] items-center bg-[#545454] text-[11px]', className)}>
    <span className="flex-1 text-center text-[10px]">{label}</span>
    <input defaultValue={value} className="w-[30px] bg-transparent text-center outline-none" />
  </label>
);

const Timeline = () => (
  <section className="flex h-[77px] shrink-0 flex-col overflow-hidden rounded-[5px] bg-[#1d1d1d]">
    <div className="flex h-[25px] shrink-0 items-center justify-between bg-[#2c2c2c] pl-[8px] pr-[5px]">
      <div className="flex items-center">
        <IconMenu icon="clock" label="Editor type" className="w-[31px]" />
        <div className="ml-[6px] flex">
          <button type="button" className="flex h-[20px] w-[69px] items-center justify-between rounded-l-[3px] border border-[#3c3c3c] bg-[#282828] pl-[6px] pr-[2px]">
            Playback
            <Glyph name="down" className="size-[11px]" />
          </button>
          <button type="button" className="flex h-[20px] w-[59px] items-center justify-between rounded-r-[3px] border border-l-0 border-[#3c3c3c] bg-[#282828] pl-[7px] pr-[2px]">
            Keying
            <Glyph name="down" className="size-[11px]" />
          </button>
        </div>
        <nav className="ml-[10px] flex gap-[15px]">
          <MenuButton>View</MenuButton>
          <MenuButton>Marker</MenuButton>
        </nav>
      </div>
      <div className="flex">
        <div className="flex overflow-hidden rounded-[3px] bg-[#262626]">
          <IconButton icon="record" label="Auto keying" className="bg-[#545454]" />
          <IconButton icon="down" label="Keying options" className="w-[15px] text-[#505050]" iconClass="size-[11px]" />
        </div>
        <div className="ml-[8px] flex gap-px overflow-hidden rounded-[3px] bg-[#444444]">
          <IconButton icon="jumpStart" label="Jump to start" className="bg-[#545454]" iconClass="size-[12px]" />
          <IconButton icon="prevKey" label="Previous keyframe" className="bg-[#545454]" />
          <button type="button" aria-label="Pause" className="flex h-[19px] w-[39px] items-center justify-center bg-[#606060] text-white">
            <Glyph name="pause" className="size-[14px]" />
          </button>
          <IconButton icon="nextKey" label="Next keyframe" className="bg-[#545454]" />
          <IconButton icon="jumpEnd" label="Jump to end" className="bg-[#545454]" iconClass="size-[12px]" />
        </div>
      </div>
      <div className="flex items-center">
        <input aria-label="Current frame" defaultValue="24" className="h-[19px] w-[75px] rounded-[3px] bg-[#545454] text-center text-[11px] outline-none" />
        <IconButton icon="stopwatch" label="Preview range" className="ml-[6px] rounded-l-[3px] bg-[#444444]" />
        <FrameField label="Start" value="1" className="w-[86px]" />
        <FrameField label="End" value="150" className="ml-px w-[84px] rounded-r-[3px]" />
      </div>
    </div>
    <div className="relative flex min-h-0 flex-1 flex-col">
      <div className="flex h-[23px] shrink-0 items-center pl-[13px] pr-[2px] text-[11px] text-[#a8a8a8]">
        {TICKS.map((t) => (
          <span key={t} className="flex-1 text-center">
            {t}
          </span>
        ))}
      </div>
      <div className="relative flex-1 bg-[#222222]">
        <div className="absolute inset-y-0 bg-[#2c2c2c]" style={{ left: '9.600%', right: '8.400%' }} />
        <div className="absolute inset-0 flex pl-[13px] pr-[2px]">
          {TICKS.map((t) => (
            <div key={t} className="flex flex-1">
              <div className="w-1/2 border-r border-[#161616]" />
              <div className="w-1/2 border-r border-[#272727]" />
            </div>
          ))}
        </div>
        <div className="absolute inset-x-0 bottom-[2px] flex items-center px-[8px]">
          <div className="h-[8px] flex-1 rounded-full bg-[#545454]" />
        </div>
      </div>
      {/* playhead */}
      <div className="absolute bottom-0 top-[3px] flex w-[24px] flex-col items-center" style={{ left: 'calc(22.280% - 12px)' }}>
        <span className="flex h-[17px] w-full shrink-0 items-center justify-center rounded-[3px] bg-[#4772b3] text-[11px] text-white">24</span>
        <span className="w-[2px] flex-1 bg-[#4772b3]" />
      </div>
      <div className="absolute left-0 top-[6px] flex h-[18px] items-center text-[#909090]">
        <Glyph name="right" className="size-[8px]" />
      </div>
      <div className="absolute right-0 top-[6px] flex h-[18px] items-center text-[#909090]">
        <Glyph name="left" className="size-[8px]" />
      </div>
    </div>
  </section>
);

/* ---------- outliner ---------- */

const OBJECTS = [
  { name: 'Frame1', modifier: true },
  { name: 'Frame2', modifier: true },
  { name: 'Frame3', modifier: true },
  { name: 'Icosphere', active: true },
  { name: 'Instancer', modifier: true },
];

const Visibility = () => (
  <div className="ml-auto flex items-center gap-[5px] pr-[10px]">
    <button type="button" aria-label="Hide in viewport">
      <Glyph name="eye" />
    </button>
    <button type="button" aria-label="Disable in renders">
      <Glyph name="camera" />
    </button>
  </div>
);

const TreeArrow = ({ open }) => (
  <svg viewBox="0 0 8 8" className="size-[8px]" fill="#b0b0b0">
    {open ? <path d="M1 1h6L4 7.500z" /> : <path d="M1 1v6l6.500-3z" />}
  </svg>
);

const Outliner = () => (
  <section className="flex h-[331px] shrink-0 flex-col overflow-hidden rounded-[5px] bg-[#282828]">
    <div className="flex h-[27px] shrink-0 items-center bg-[#2c2c2c] pl-[9px] pr-[6px]">
      <IconMenu icon="outliner" label="Editor type" className="w-[31px]" />
      <IconMenu icon="images" label="Display mode" className="ml-[6px] w-[31px]" />
      <label className="ml-[24px] mr-auto flex h-[20px] w-[110px] items-center rounded-[3px] border border-[#3c3c3c] bg-[#1d1d1d] pl-[4px]">
        <Glyph name="search" />
        <input aria-label="Search outliner" className="min-w-0 flex-1 bg-transparent outline-none" />
      </label>
      <IconMenu icon="filter" label="Filter" className="w-[31px]" />
      <IconButton icon="newCollection" label="New collection" className="ml-[6px] rounded-[3px] bg-[#444444]" />
    </div>
    <ul className="flex flex-col text-[#c0c0c0]">
      <li className="flex h-[20px] items-center gap-[6px] pl-[22px]">
        <Glyph name="collection" />
        Scene Collection
      </li>
      <li className="flex h-[20px] items-center bg-[#2b2b2b] pl-[26px]">
        <TreeArrow open />
        <span className="ml-[7px] mr-[5px] flex size-[19px] items-center justify-center rounded-[4px] bg-[#4a4a4a] text-white">
          <Glyph name="collection" />
        </span>
        Collection
        <span className="relative ml-auto flex text-[#282828]">
          <input type="checkbox" defaultChecked aria-label="Exclude from view layer" className="size-[11px] appearance-none bg-[#e0e0e0]" />
          <svg viewBox="0 0 11 11" className="pointer-events-none absolute inset-0" fill="none" stroke="currentColor" strokeWidth="1.800">
            <path d="m2 5.500 2.500 2.500L9 2.500" />
          </svg>
        </span>
        <div className="ml-[6px] text-[#e0e0e0]">
          <Visibility />
        </div>
      </li>
      {OBJECTS.map((o, i) => (
        <li key={o.name} className={clsx('flex h-[20px] items-center pl-[30px]', o.active ? 'bg-[#304b80]' : i % 2 ? 'bg-[#2b2b2b]' : 'bg-[#282828]')}>
          <span className="h-full w-px bg-[#505050]" />
          <span className="ml-[15px]">
            <TreeArrow />
          </span>
          <span className={clsx('ml-[7px] flex size-[19px] items-center justify-center rounded-[4px] text-[#d98a4a]', o.active && 'bg-[#8a7a80]')}>
            <Glyph name="mesh" />
          </span>
          <span className={clsx('ml-[5px]', o.active && 'text-[#f0a45c]')}>{o.name}</span>
          <span className="ml-[21px] flex gap-[5px]">
            {o.modifier && <Glyph name="wrench" className="size-[15px] text-[#5b7bd0]" />}
            <Glyph name="meshData" className="size-[15px] text-[#1fc796]" />
          </span>
          <div className="ml-auto text-[#e0e0e0]">
            <Visibility />
          </div>
        </li>
      ))}
      <li className="h-[20px] bg-[#2b2b2b]" />
      <li className="h-[20px]" />
      <li className="h-[20px] bg-[#2b2b2b]" />
      <li className="h-[20px]" />
      <li className="h-[20px] bg-[#2b2b2b]" />
      <li className="h-[20px]" />
      <li className="h-[20px] bg-[#2b2b2b]" />
    </ul>
  </section>
);

/* ---------- properties ---------- */

const TAB_GROUPS = [
  [['tool', 'text-[#b0b0b0]']],
  [
    ['render', 'text-[#b0b0b0]'],
    ['output', 'text-[#b0b0b0]'],
    ['images', 'text-[#b0b0b0]'],
    ['scene', 'text-[#b0b0b0]'],
    ['world', 'text-[#b8485c]'],
  ],
  [['collectionLine', 'text-[#d0d0d0]']],
  [
    ['object', 'text-[#e8954a]'],
    ['wrenchFill', 'text-[#5b7fd0]'],
    ['particles', 'text-[#5b7fd0]'],
    ['physics', 'text-[#5b7fd0]'],
    ['constraint', 'text-[#5b7fd0]'],
    ['meshData', 'text-[#1fc796]'],
    ['materialTab', 'text-[#b8485c]'],
  ],
  [['texture', 'text-[#b8485c]']],
];

const PANELS = ['Relations', 'Collections', 'Instancing', 'Motion Paths', 'Visibility', 'Viewport Display', 'Line Art', 'Custom Properties'];

const KeyDot = () => (
  <button type="button" aria-label="Animate" className="flex w-[19px] items-center justify-center">
    <span className="size-[4px] rounded-full bg-[#d0d0d0]" />
  </button>
);

const VectorField = ({ name, values }) => (
  <div className="flex flex-col gap-px">
    {['X', 'Y', 'Z'].map((axis, i) => (
      <div key={axis} className="flex h-[19px] items-stretch">
        <label htmlFor={name + axis} className="flex w-[107px] items-center justify-end">
          {i === 0 ? `${name} ${axis}` : axis}
        </label>
        <input
          id={name + axis}
          defaultValue={values[i]}
          className={clsx('ml-[8px] min-w-0 flex-1 bg-[#545454] text-center text-[11px] outline-none', i === 0 && 'rounded-t-[3px]', i === 2 && 'rounded-b-[3px]')}
        />
        <button type="button" aria-label={`Lock ${name} ${axis}`} className="flex w-[23px] items-center justify-center text-[#b0b0b0]">
          <Glyph name="lock" />
        </button>
        <KeyDot />
      </div>
    ))}
  </div>
);

const Grip = () => (
  <svg viewBox="0 0 12 6" className="ml-auto h-[6px] w-[12px]" fill="#8a8a8a">
    {[1, 4, 7, 10].map((x) => (
      <g key={x}>
        <rect x={x} y="1" width="1" height="1" />
        <rect x={x} y="4" width="1" height="1" />
      </g>
    ))}
  </svg>
);

const Properties = () => (
  <section className="flex min-h-0 flex-1 flex-col overflow-hidden rounded-[5px] bg-[#303030]">
    <div className="flex h-[25px] shrink-0 items-center pl-[11px] pr-[6px]">
      <IconMenu icon="props" label="Editor type" className="w-[29px]" />
      <label className="ml-[73px] flex h-[20px] w-[110px] items-center rounded-[3px] border border-[#3c3c3c] bg-[#1d1d1d] pl-[4px]">
        <Glyph name="search" />
        <input aria-label="Search properties" className="min-w-0 flex-1 bg-transparent outline-none" />
      </label>
      <IconButton icon="down" label="Options" className="ml-auto rounded-[3px] border border-[#3c3c3c] bg-[#282828]" iconClass="size-[12px]" />
    </div>
    <div className="flex min-h-0 flex-1">
      <div className="flex w-[28px] shrink-0 flex-col gap-[8px] bg-[#1b1b1b] pl-px pt-[9px]">
        {TAB_GROUPS.map((group) => (
          <div key={group[0][0]}>
            {group.map(([icon, color]) => (
              <button
                key={icon}
                type="button"
                aria-label={icon}
                className={clsx('flex h-[28px] w-full items-center justify-center', color, icon === 'object' && 'rounded-l-[4px] bg-[#303030]')}
              >
                <Glyph name={icon} />
              </button>
            ))}
          </div>
        ))}
      </div>
      <div className="min-w-0 flex-1 pl-[8px] pr-[6px] pt-px">
        <div className="flex h-[36px] items-center gap-[9px] pl-[2px]">
          <Glyph name="object" />
          Icosphere
          <button type="button" aria-label="Pin" className="ml-auto text-[#909090]">
            <Glyph name="pin" />
          </button>
        </div>
        <div className="mt-[7px] flex h-[20px] items-stretch overflow-hidden rounded-[3px] border border-[#3c3c3c] bg-[#1d1d1d]">
          <button type="button" aria-label="Browse object" className="flex w-[32px] items-center justify-center bg-[#282828]">
            <Glyph name="object" />
            <Glyph name="down" className="size-[11px]" />
          </button>
          <input aria-label="Object name" defaultValue="Icosphere" className="min-w-0 flex-1 bg-transparent pl-[7px] outline-none" />
          <button type="button" className="w-[43px] bg-[#545454] text-[11px]">
            2
          </button>
        </div>

        <div className="mt-[10px] rounded-[4px] bg-[#3d3d3d] pb-px">
          <h2 className="flex h-[27px] items-center gap-[3px] pl-[7px] pr-[6px]">
            <Glyph name="down" className="size-[12px] text-[#a0a0a0]" />
            Transform
            <Grip />
          </h2>
          <div className="flex flex-col gap-[6px] pr-[7px] pt-[7px]">
            <VectorField name="Location" values={['15.708 m', '-21.009 m', '19.006 m']} />
            <VectorField name="Rotation" values={['0°', '0°', '0°']} />
            <div className="flex h-[19px] items-stretch">
              <label htmlFor="rotation-mode" className="flex w-[107px] items-center justify-end">
                Mode
              </label>
              <div className="ml-[8px] flex flex-1 items-center rounded-[3px] bg-[#282828] pr-[1px]">
                <select id="rotation-mode" className="min-w-0 flex-1 appearance-none bg-transparent pl-[7px] outline-none" defaultValue="XYZ Euler">
                  <option>XYZ Euler</option>
                </select>
                <Glyph name="down" className="size-[12px]" />
              </div>
              <span className="w-[23px]" />
              <KeyDot />
            </div>
            <VectorField name="Scale" values={['19.265', '19.265', '19.265']} />
          </div>
          <button type="button" className="mt-[9px] flex h-[25px] items-center gap-[3px] pl-[21px]">
            <Glyph name="right" className="size-[12px] text-[#a0a0a0]" />
            Delta Transform
          </button>
        </div>

        <div className="mt-[2px] flex flex-col gap-[2px]">
          {PANELS.map((p) => (
            <div key={p} className="flex h-[25px] items-center rounded-[4px] bg-[#3d3d3d] pl-[7px] pr-[6px]">
              <button type="button" className="flex items-center gap-[3px]">
                <Glyph name="right" className="size-[12px] text-[#a0a0a0]" />
                {p}
              </button>
              <Grip />
            </div>
          ))}
        </div>
      </div>
    </div>
  </section>
);

/* ---------- status bar ---------- */

const StatusBar = () => (
  <footer className="flex h-[17px] shrink-0 items-center bg-[#1d1d1d] pl-[9px] pr-[6px] pt-[5px] text-[#989898]">
    {[
      ['mouseL', 'Select'],
      ['mouseM', 'Rotate View'],
      ['mouseR', 'Object Context Menu'],
    ].map(([icon, text]) => (
      <span key={icon} className="flex w-[212px] items-center gap-[10px]">
        <Glyph name={icon} />
        {text}
      </span>
    ))}
    <button type="button" className="ml-[258px] flex h-[17px] w-[95px] items-center gap-[10px] rounded-t-[3px] bg-[#454545] pl-[3px] text-[#e0e0e0]">
      <Glyph name="cancel" className="size-[13px]" />
      Anim Player
    </button>
    <span className="ml-auto">3.3.0 Beta</span>
  </footer>
);

export default function App() {
  return (
    <div className="flex h-screen flex-col overflow-hidden bg-[#121212] font-['DejaVu_Sans',sans-serif] text-[10px] leading-none text-[#dcdcdc]">
      <TopBar />
      <main className="flex min-h-0 flex-1 gap-[5px] pt-px pl-px">
        <div className="flex min-w-0 flex-1 flex-col gap-[4px]">
          <div className="flex min-h-0 flex-1 gap-[3px]">
            <Viewport />
            <NodeEditor />
          </div>
          <Timeline />
        </div>
        <aside className="flex w-[330px] shrink-0 flex-col gap-[3px]">
          <Outliner />
          <Properties />
        </aside>
      </main>
      <StatusBar />
    </div>
  );
}
